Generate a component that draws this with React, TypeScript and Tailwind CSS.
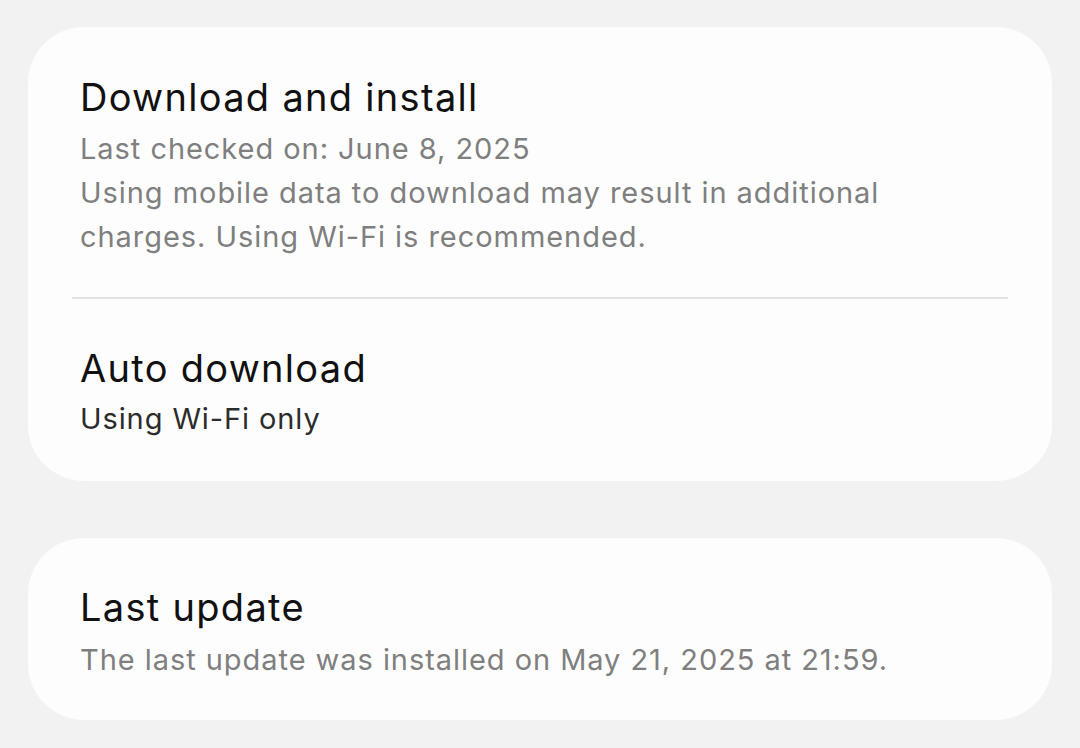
import React from "react";

const font = { fontFamily: "Inter, 'Noto Sans', sans-serif" };

const App = () => {
  return (
    <div className="min-h-[748px] w-[1080px] bg-[#f2f2f2] px-[28px] pt-[27px]" style={font}>
      <div className="flex flex-col rounded-[56px] bg-[#fdfdfd] pt-[46px] pb-[40px]">
        <div className="px-[52px]">
          <h2 className="text-[38px] leading-[48px] tracking-[1.3px] text-[#111]">Download and install</h2>
          <div className="mt-[6px] text-[29px] leading-[44px] tracking-[0.95px] text-[#7f7f7f]">
            <p>Last checked on: June 8, 2025</p>
            <p className="w-[860px]">
              Using mobile data to download may result in additional charges. Using Wi-Fi is recommended.
            </p>
          </div>
        </div>
        <div className="mx-[44px] mt-[38px] mb-[45px] h-[2px] bg-[#e2e2e2]" />
        <div className="px-[52px]">
          <h2 className="text-[38px] leading-[48px] tracking-[1.3px] text-[#111]">Auto download</h2>
          <p className="mt-[5px] text-[29px] leading-[44px] tracking-[0.9px] text-[#2c2c2c]">Using Wi-Fi only</p>
        </div>
      </div>
      <div className="mt-[57px] flex flex-col rounded-[56px] bg-[#fdfdfd] px-[52px] pt-[45px] pb-[38px]">
        <h2 className="text-[38px] leading-[48px] tracking-[1.3px] text-[#111]">Last update</h2>
        <p className="mt-[7px] text-[29px] leading-[44px] tracking-[0.95px] text-[#7f7f7f]">
          The last update was installed on May 21, 2025 at 21:59.
        </p>
      </div>
    </div>
  );
};

export default App;
